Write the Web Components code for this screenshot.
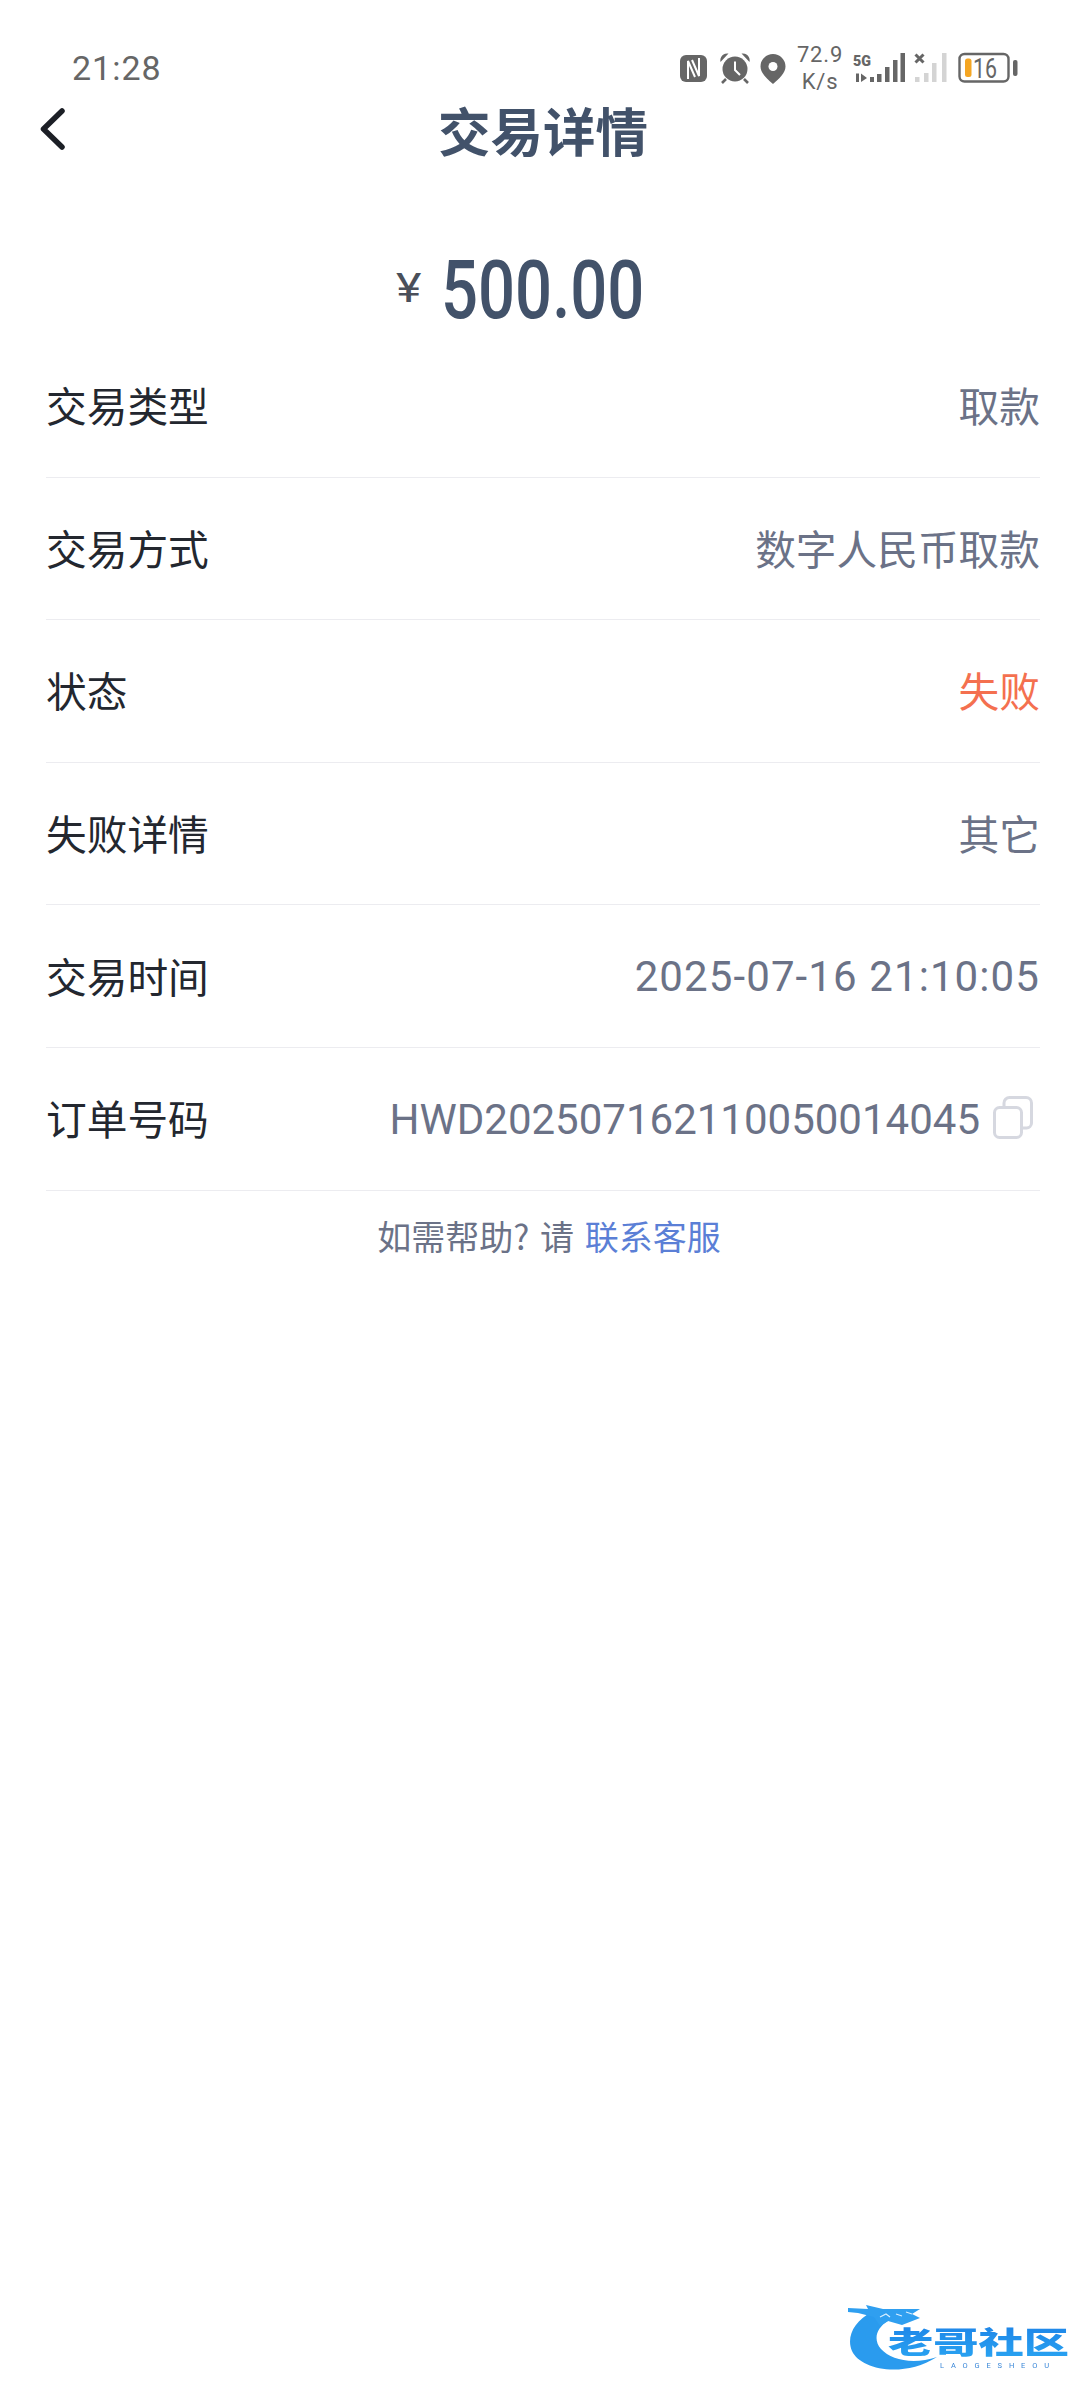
<!DOCTYPE html>
<html lang="zh"><head><meta charset="utf-8"><title>交易详情</title>
<style>
html,body{margin:0;background:#fff}
body{width:1086px;height:2400px;position:relative;overflow:hidden;font-family:"Noto Sans CJK SC","Roboto",sans-serif}
main{display:block}
</style></head><body>
<status-bar></status-bar>
<nav-header>交易详情</nav-header>
<amount-display currency="¥">500.00</amount-display>
<main>
<detail-row label="交易类型">取款</detail-row>
<detail-row label="交易方式">数字人民币取款</detail-row>
<detail-row label="状态" tone="fail">失败</detail-row>
<detail-row label="失败详情">其它</detail-row>
<detail-row label="交易时间" latin style="--ls:1.1px">2025-07-16 21:10:05</detail-row>
<detail-row label="订单号码" latin copy>HWD202507162110050014045</detail-row>
</main>
<help-line></help-line>
<brand-mark></brand-mark>
<script>
function def(name,html,init){customElements.define(name,class extends HTMLElement{
  constructor(){super();const r=this.attachShadow({mode:"open"});r.innerHTML=html;}
  connectedCallback(){if(init)init(this,this.shadowRoot);}
});}
def("status-bar",`<style>
:host{display:flex;align-items:center;height:100px;box-sizing:border-box;padding:36px 0 0 72px;color:#666;font-family:Roboto,sans-serif}
.t{font-size:34px;letter-spacing:1px;line-height:64px}
svg{position:absolute;left:660px;top:30px;overflow:visible}
</style><span class="t">21:28</span>
<svg width="400" height="70" viewBox="0 0 400 70" font-family="Roboto,sans-serif" aria-label="status icons">
<g fill="#666">
<rect x="20" y="25" width="27" height="27" rx="6"/>
<path d="M28 49V31l7 16M39 28v18L32 30" fill="none" stroke="#fff" stroke-width="2"/>
<circle cx="75" cy="39" r="12.5"/>
<path d="M75 31.500V40l5 5" fill="none" stroke="#fff" stroke-width="2"/>
<path d="M60.500 32a7 7 0 0 1 8-8.500zM89.500 32a7 7 0 0 0-8-8.500z"/>
<path d="M66 49l-4 4M84 49l4 4" stroke="#666" stroke-width="2.600"/>
<path d="M113 24a12.500 12.500 0 0 1 12.500 12.500C125.500 43 119 49 113 54c-6-5-12.500-11-12.500-17.500A12.500 12.500 0 0 1 113 24z"/>
<circle cx="113" cy="36.500" r="4.500" fill="#fff"/>
<text x="160" y="32" font-size="22" text-anchor="middle" letter-spacing=".8">72.9</text>
<text x="160" y="59" font-size="22" text-anchor="middle" letter-spacing=".8">K/s</text>
<text x="193" y="36" font-size="15" font-weight="900" textLength="18" lengthAdjust="spacingAndGlyphs">5G</text>
<path d="M196 43.500h3V52h-3zM201 43.500l6 4.500-6 4z"/>
<rect x="210" y="47" width="4" height="5"/>
<rect x="217" y="44" width="4.500" height="8"/>
<rect x="225" y="37" width="4.500" height="15"/>
<rect x="233" y="30" width="4.500" height="22"/>
<rect x="240.500" y="23" width="4.500" height="29"/>
<path d="M255.500 24.500l8 8M263.500 24.500l-8 8" stroke="#666" stroke-width="3"/>
</g>
<g fill="#d4d4d4">
<rect x="255" y="47" width="4.500" height="5"/>
<rect x="264" y="43" width="4.500" height="9"/>
<rect x="272" y="33" width="4.500" height="19"/>
<rect x="282" y="23" width="4.500" height="29"/>
</g>
<rect x="299.500" y="24" width="49" height="27.500" rx="5" fill="none" stroke="#666" stroke-width="2.400"/>
<rect x="305" y="28.500" width="6.500" height="18.500" rx="2.500" fill="#f5a623"/>
<text x="313" y="47.500" font-size="27" fill="#666" textLength="24" lengthAdjust="spacingAndGlyphs">16</text>
<rect x="353" y="30" width="4.500" height="16" rx="2" fill="#666"/>
</svg>`);
def("nav-header",`<style>
:host{display:flex;align-items:center;justify-content:center;height:65px;box-sizing:border-box;padding-bottom:7px;position:relative;color:#42526a;font-size:52.5px;font-weight:700}
svg{position:absolute;left:37px;top:7px}
</style><svg width="30" height="44" viewBox="0 0 30 44" aria-label="back"><path d="M25 4 6.500 22 25 40" fill="none" stroke="#1c1f26" stroke-width="5.500" stroke-linecap="round" stroke-linejoin="round"/></svg><slot></slot>`);
def("amount-display",`<style>
:host{display:flex;align-items:center;height:170px;box-sizing:border-box;padding:82px 0 0 396px;color:#42526a}
.c{display:inline-block;font:400 41px/88px Roboto,sans-serif;color:#4a4f5a;width:44.5px;transform:translateY(-3px) scaleX(1.18);transform-origin:left center}
.v{display:inline-block;font:500 81px/88px Roboto,sans-serif;transform:scaleX(.805);transform-origin:left center;white-space:nowrap}
</style><span class="c"></span><span class="v"><slot></slot></span>`,(h,r)=>{r.querySelector(".c").textContent=h.getAttribute("currency");});
def("detail-row",`<style>
:host{display:flex;align-items:center;justify-content:space-between;height:142.6px;box-sizing:border-box;margin:0 46px;padding-bottom:2px;border-bottom:1px solid #ececf0;font-size:40.7px;color:#23272f}
.v{display:flex;align-items:center;color:#6b7287;white-space:nowrap}
:host([tone=fail]) .v{color:#f4704f}
:host([latin]) .s{font-family:Roboto,"Noto Sans CJK SC",sans-serif;font-size:42px;padding-top:3px;letter-spacing:var(--ls,0)}
.i{display:none;margin:0 7px 0 13px}
:host([copy]) .i{display:block}
</style><span class="l"></span><span class="v"><span class="s"><slot></slot></span>
<svg class="i" width="40" height="43" viewBox="0 0 40 43" aria-label="copy"><path d="M11 10V7a5.500 5.500 0 0 1 5.500-5.500H33A5.500 5.500 0 0 1 38.500 7v20a5 5 0 0 1-5 5H30" fill="none" stroke="#d6d8e0" stroke-width="3"/><rect x="1.500" y="11.500" width="27" height="30" rx="5" fill="none" stroke="#d6d8e0" stroke-width="3"/></svg></span>`,(h,r)=>{r.querySelector(".l").textContent=h.getAttribute("label");});
def("help-line",`<style>
:host{display:block;text-align:center;font-size:34px;line-height:90px;word-spacing:3px;padding-left:12px;color:#6b7287}
b{font-weight:400;color:#5b7fd6}
</style>如需帮助? 请 <b>联系客服</b>`);
def("brand-mark",`<style>
:host{position:absolute;left:840px;top:2295px;display:block;width:240px;height:90px}
svg{display:block;filter:blur(.7px)}
</style><svg width="240" height="90" viewBox="0 0 240 90" aria-label="老哥社区">
<defs><linearGradient id="g" x1="0" y1="0" x2="0" y2="1"><stop offset="0" stop-color="#1c7fe6"/><stop offset="1" stop-color="#2aa6f2"/></linearGradient></defs>
<path d="M32 17C14 26 6 42 12 56c8 18 50 28 85 6-24 8-46 3-56-8C33 45 36 33 48 26z" fill="#2a9bee"/>
<path d="M8 13l20 1-2-4 17 4 37 0-8 5 8 4-18 7-14-4-8 5-6-9-16-4-10-1z" fill="#2f9ff0"/>
<path d="M40 22l6-3 4 3M56 19l6 2M66 17l6 2" stroke="#d8eeff" stroke-width="1.200" fill="none"/>
<text x="48" y="58" fill="url(#g)" font-family="'Noto Sans CJK SC',sans-serif" font-weight="900" font-size="30" textLength="181" lengthAdjust="spacingAndGlyphs">老哥社区</text>
<text x="100" y="73" font-family="Roboto,sans-serif" font-size="7.5" fill="#3a87d8" textLength="109" lengthAdjust="spacing">LAOGESHEOU</text>
</svg>`);
</script>
</body></html>
